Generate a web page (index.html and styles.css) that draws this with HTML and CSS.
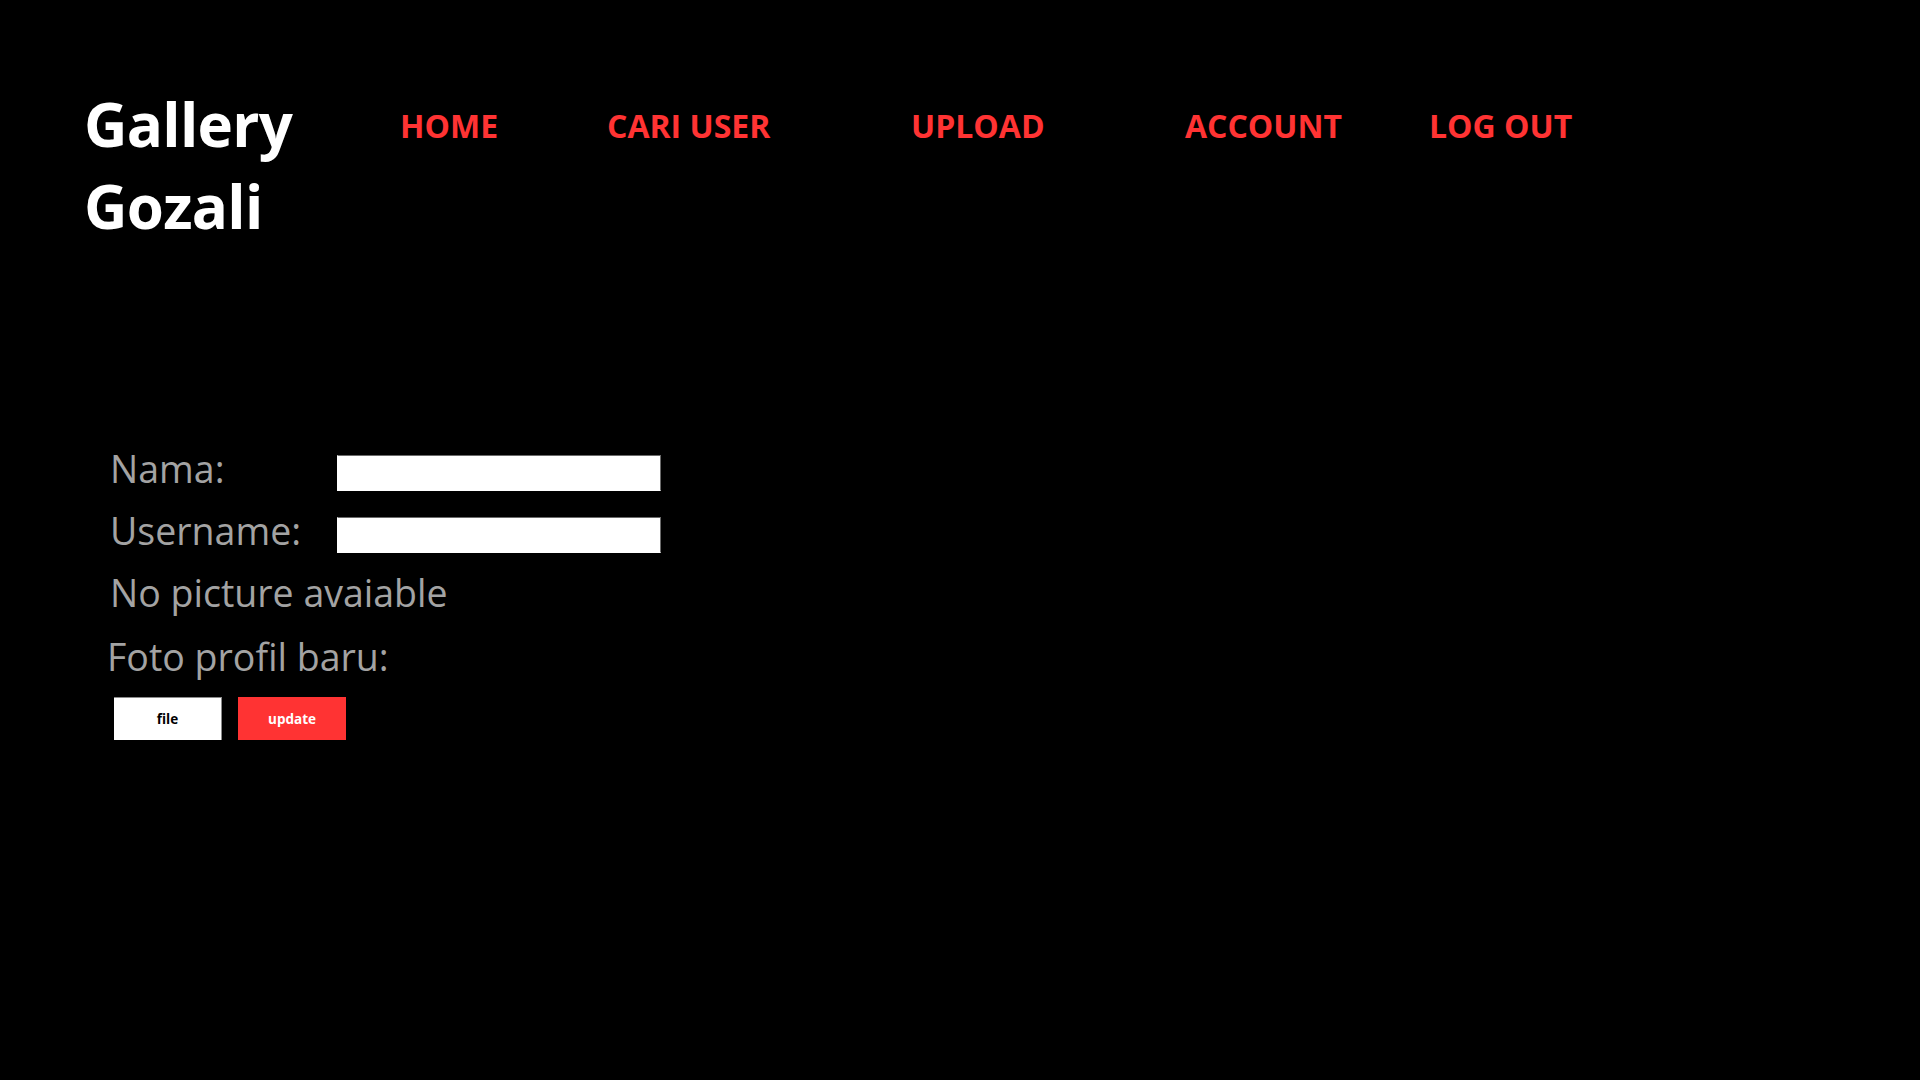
FILE: index.html
```html
<!DOCTYPE html>
<html lang="id">
<head>
<meta charset="utf-8">
<title>Gallery Gozali - Account</title>
<link rel="stylesheet" href="styles.css">
</head>
<body>
<header class="header">
  <h1 class="brand">Gallery Gozali</h1>
  <nav class="nav">
    <a class="nav-link" href="#">HOME</a>
    <a class="nav-link" href="#">CARI USER</a>
    <a class="nav-link" href="#">UPLOAD</a>
    <a class="nav-link" href="#">ACCOUNT</a>
    <a class="nav-link" href="#">LOG OUT</a>
  </nav>
</header>
<main class="profile">
  <div class="row">
    <span class="label">Nama:</span>
    <input class="field" type="text">
  </div>
  <div class="row">
    <span class="label">Username:</span>
    <input class="field" type="text">
  </div>
  <div class="row">
    <span class="label">No picture avaiable</span>
  </div>
  <div class="row row-new">
    <span class="label label-new">Foto profil baru:</span>
  </div>
  <div class="actions">
    <button class="btn btn-file" type="button">file</button>
    <button class="btn btn-update" type="button">update</button>
  </div>
</main>
</body>
</html>
```
FILE: styles.css
```css
html, body {
  margin: 0;
  padding: 0;
  background: #000;
  height: 100%;
}

body {
  font-family: "Open Sans", "Liberation Sans", sans-serif;
  color: #fff;
}

.header {
  display: flex;
  align-items: flex-start;
  padding: 83px 0 0 84px;
}

.brand {
  margin: 0;
  width: 316px;
  font-size: 60px;
  font-weight: 700;
  line-height: 82px;
  letter-spacing: -0.7px;
  color: #fff;
}

.nav {
  display: grid;
  grid-template-columns: 207px 304px 274px 244px auto;
  margin-top: 22px;
}

.nav-link {
  font-size: 32px;
  font-weight: 700;
  line-height: 41px;
  color: #ff3333;
  text-decoration: none;
}

.profile {
  display: flex;
  flex-direction: column;
  padding: 197px 0 0 107px;
}

.row {
  display: flex;
  align-items: flex-start;
  height: 49px;
  margin-bottom: 13px;
}

.row-new {
  margin-top: 2px;
  margin-bottom: 16px;
}

.label {
  width: 227px;
  padding-left: 3px;
  font-size: 37.5px;
  line-height: 49px;
  color: #a3a3a3;
  white-space: nowrap;
}

.label-new {
  padding-left: 0;
}

.field {
  box-sizing: border-box;
  width: 324px;
  height: 36px;
  margin: 11px 0 0 0;
  padding: 0 4px;
  background: #fff;
  border: 1px solid #fff;
  border-top-color: #6a6a6a;
  border-right-color: #6a6a6a;
  outline: none;
  font-family: "Open Sans", sans-serif;
}

.actions {
  display: flex;
  gap: 16px;
  padding-left: 7px;
}

.btn {
  box-sizing: border-box;
  width: 108px;
  height: 43px;
  padding: 0;
  border: none;
  font-family: "Open Sans", "Liberation Sans", sans-serif;
  font-size: 13.5px;
  font-weight: 700;
  cursor: pointer;
}

.btn-file {
  background: #fff;
  color: #000;
  border-top: 1px solid #8a8a8a;
  border-right: 1px solid #8a8a8a;
}

.btn-update {
  background: #ff3333;
  color: #fff;
}
```
